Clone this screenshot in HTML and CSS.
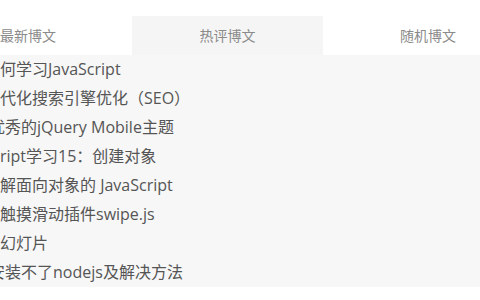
FILE: index.html
```html
<!DOCTYPE html>
<html lang="zh">
<head>
<meta charset="utf-8">
<link rel="stylesheet" href="styles.css">
</head>
<body>
<div class="widget">
  <div class="tabs">
    <div class="tab tab-first">最新博文</div>
    <div class="tab tab-active">热评博文</div>
    <div class="tab tab-last">随机博文</div>
  </div>
  <ul class="list">
    <li>何学习JavaScript</li>
    <li>代化搜索引擎优化（SEO）</li>
    <li><span class="cut">优</span>秀的jQuery Mobile主题</li>
    <li>ript学习15：创建对象</li>
    <li>解面向对象的 JavaScript</li>
    <li>触摸滑动插件swipe.js</li>
    <li>幻灯片</li>
    <li><span class="cut">安</span>装不了nodejs及解决方法</li>
  </ul>
</div>
</body>
</html>
```
FILE: styles.css
```css
html, body {
  margin: 0;
  padding: 0;
  background: #ffffff;
}
body {
  font-family: "Open Sans", "Noto Sans CJK SC", sans-serif;
  overflow: hidden;
}
.widget {
  padding-top: 16px;
  width: 480px;
}
.tabs {
  display: flex;
  height: 39px;
}
.tab {
  font-size: 14px;
  line-height: 39px;
  color: #8a8a8a;
  white-space: nowrap;
}
.tab-first {
  width: 132px;
}
.tab-active {
  width: 191px;
  background: #f5f5f5;
  text-align: center;
}
.tab-last {
  flex: 1;
  padding-left: 77px;
}
.list {
  list-style: none;
  margin: 0;
  padding: 0;
  background: #f7f7f7;
}
.list li {
  height: 29px;
  line-height: 29px;
  font-size: 16px;
  color: #555555;
  white-space: nowrap;
  overflow: hidden;
}
.cut {
  margin-left: -11px;
}
```
